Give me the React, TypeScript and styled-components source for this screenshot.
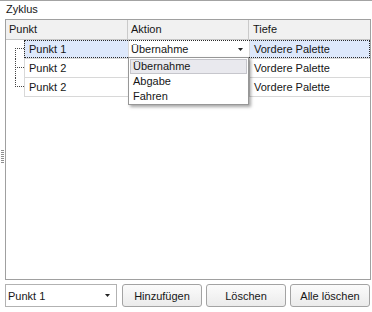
import styled, { createGlobalStyle } from "styled-components";

const GlobalStyle = createGlobalStyle`
  html, body {
    margin: 0;
    padding: 0;
    background: #fff;
  }
  body {
    font-family: "Liberation Sans", Arial, sans-serif;
    font-size: 11px;
    color: #161616;
  }
`;

const Page = styled.div`
  display: flex;
  width: 372px;
  height: 312px;
  box-sizing: border-box;
  border-top: 1px solid #a3a3a3;
  background: #fff;
`;

const Gutter = styled.div`
  width: 5px;
  display: flex;
  align-items: center;
`;

const Main = styled.div`
  width: 366px;
  display: flex;
  flex-direction: column;
`;

const Caption = styled.div`
  height: 18px;
  box-sizing: border-box;
  padding: 2px 0 0 1px;
  line-height: 13px;
`;

const TreeGrid = styled.div`
  position: relative;
  flex: 1;
  border: 1px solid #a0a0a0;
  background: #fff;
`;

const Header = styled.div`
  display: grid;
  grid-template-columns: 122px 121px 1fr;
  height: 20px;
  box-sizing: border-box;
  border-bottom: 1px solid #c6c6c6;
  background: #f1f1f1;
`;

const HeaderCell = styled.div<{ $last?: boolean }>`
  padding-left: ${(p) => (p.$last ? "4px" : "3px")};
  line-height: 19px;
  border-right: ${(p) => (p.$last ? "none" : "1px solid #cacaca")};
`;

const Row = styled.div`
  display: flex;
  height: 19px;
`;

const RowCells = styled.div<{ $focused?: boolean }>`
  position: relative;
  flex: 1;
  display: grid;
  grid-template-columns: 104px 121px 1fr;
  box-sizing: border-box;
  border-left: 1px solid #d8d8d8;
  border-bottom: 1px solid #d8d8d8;

  &::after {
    content: "";
    display: ${(p) => (p.$focused ? "block" : "none")};
    position: absolute;
    left: -1px;
    top: 0;
    right: 0;
    bottom: 0;
    border: 1px dotted #2a2a2a;
    pointer-events: none;
  }
`;

const Cell = styled.div<{ $selected?: boolean; $last?: boolean }>`
  padding-left: 4px;
  line-height: 18px;
  white-space: nowrap;
  overflow: hidden;
  background: ${(p) => (p.$selected ? "#dde8fb" : "#fff")};
  border-right: ${(p) => (p.$last ? "none" : "1px solid #d8d8d8")};
`;

const EditorCell = styled.div`
  display: flex;
  align-items: center;
  justify-content: space-between;
  padding: 0 6px 0 2px;
  background: #fff;
  border-right: 1px solid #d8d8d8;
  line-height: 18px;
`;

const DropList = styled.div`
  position: absolute;
  left: 122px;
  top: 37px;
  width: 121px;
  height: 48px;
  box-sizing: border-box;
  padding: 1px 1px 0;
  border: 1px solid #979797;
  background: #fff;
  box-shadow: 2px 2px 3px rgba(0, 0, 0, 0.35);
`;

const DropItem = styled.div<{ $active?: boolean }>`
  height: 15px;
  box-sizing: border-box;
  padding-left: 2px;
  line-height: 13px;
  background: ${(p) => (p.$active ? "#e9e9ee" : "transparent")};
  border: 1px solid ${(p) => (p.$active ? "#c6c6cc" : "transparent")};
`;

const Toolbar = styled.div`
  display: flex;
  gap: 4px;
  height: 23px;
  margin: 4px 0 5px;
`;

const Combo = styled.div`
  width: 112px;
  margin-right: 1px;
  display: flex;
  align-items: center;
  justify-content: space-between;
  box-sizing: border-box;
  padding: 0 6px 0 2px;
  border: 1px solid #b2b2b2;
  background: #fff;
`;

const Button = styled.div`
  width: 80px;
  box-sizing: border-box;
  display: flex;
  align-items: center;
  justify-content: center;
  border: 1px solid #a3a3a3;
  border-radius: 3px;
  background: linear-gradient(#fbfbfb, #ebebeb);
`;

const DownArrow = () => (
  <svg width="5" height="3" viewBox="0 0 5 3">
    <polygon points="0,0 5,0 2.5,3" fill="#222" />
  </svg>
);

const Grip = () => (
  <svg width="4" height="14" viewBox="0 0 4 14">
    {[0, 2, 4, 6, 8, 10, 12].map((y) => (
      <rect key={y} x="1" y={y} width="3" height="1" fill="#8e8e8e" />
    ))}
  </svg>
);

type Branch = "first" | "middle" | "last";

const TreeLines = ({ pos }: { pos: Branch }) => {
  const y1 = pos === "first" ? 8 : 0;
  const y2 = pos === "last" ? 8 : 19;
  return (
    <svg width="18" height="19" viewBox="0 0 18 19" shapeRendering="crispEdges">
      <line x1="9.5" y1={y1} x2="9.5" y2={y2} stroke="#444" strokeDasharray="1 1" />
      <line x1="9" y1="8.5" x2="18" y2="8.5" stroke="#444" strokeDasharray="1 1" />
    </svg>
  );
};

const rows: { punkt: string; tiefe: string; branch: Branch }[] = [
  { punkt: "Punkt 1", tiefe: "Vordere Palette", branch: "first" },
  { punkt: "Punkt 2", tiefe: "Vordere Palette", branch: "middle" },
  { punkt: "Punkt 2", tiefe: "Vordere Palette", branch: "last" },
];

export default function App() {
  return (
    <>
      <GlobalStyle />
      <Page>
        <Gutter>
          <Grip />
        </Gutter>
        <Main>
          <Caption>Zyklus</Caption>
          <TreeGrid>
            <Header>
              <HeaderCell>Punkt</HeaderCell>
              <HeaderCell>Aktion</HeaderCell>
              <HeaderCell $last>Tiefe</HeaderCell>
            </Header>
            {rows.map((r, i) => (
              <Row key={i}>
                <TreeLines pos={r.branch} />
                <RowCells $focused={i === 0}>
                  <Cell $selected={i === 0}>{r.punkt}</Cell>
                  {i === 0 ? (
                    <EditorCell>
                      <span>Übernahme</span>
                      <DownArrow />
                    </EditorCell>
                  ) : (
                    <Cell />
                  )}
                  <Cell $selected={i === 0} $last>
                    {r.tiefe}
                  </Cell>
                </RowCells>
              </Row>
            ))}
            <DropList>
              <DropItem $active>Übernahme</DropItem>
              <DropItem>Abgabe</DropItem>
              <DropItem>Fahren</DropItem>
            </DropList>
          </TreeGrid>
          <Toolbar>
            <Combo>
              <span>Punkt 1</span>
              <DownArrow />
            </Combo>
            <Button>Hinzufügen</Button>
            <Button>Löschen</Button>
            <Button>Alle löschen</Button>
          </Toolbar>
        </Main>
      </Page>
    </>
  );
}
